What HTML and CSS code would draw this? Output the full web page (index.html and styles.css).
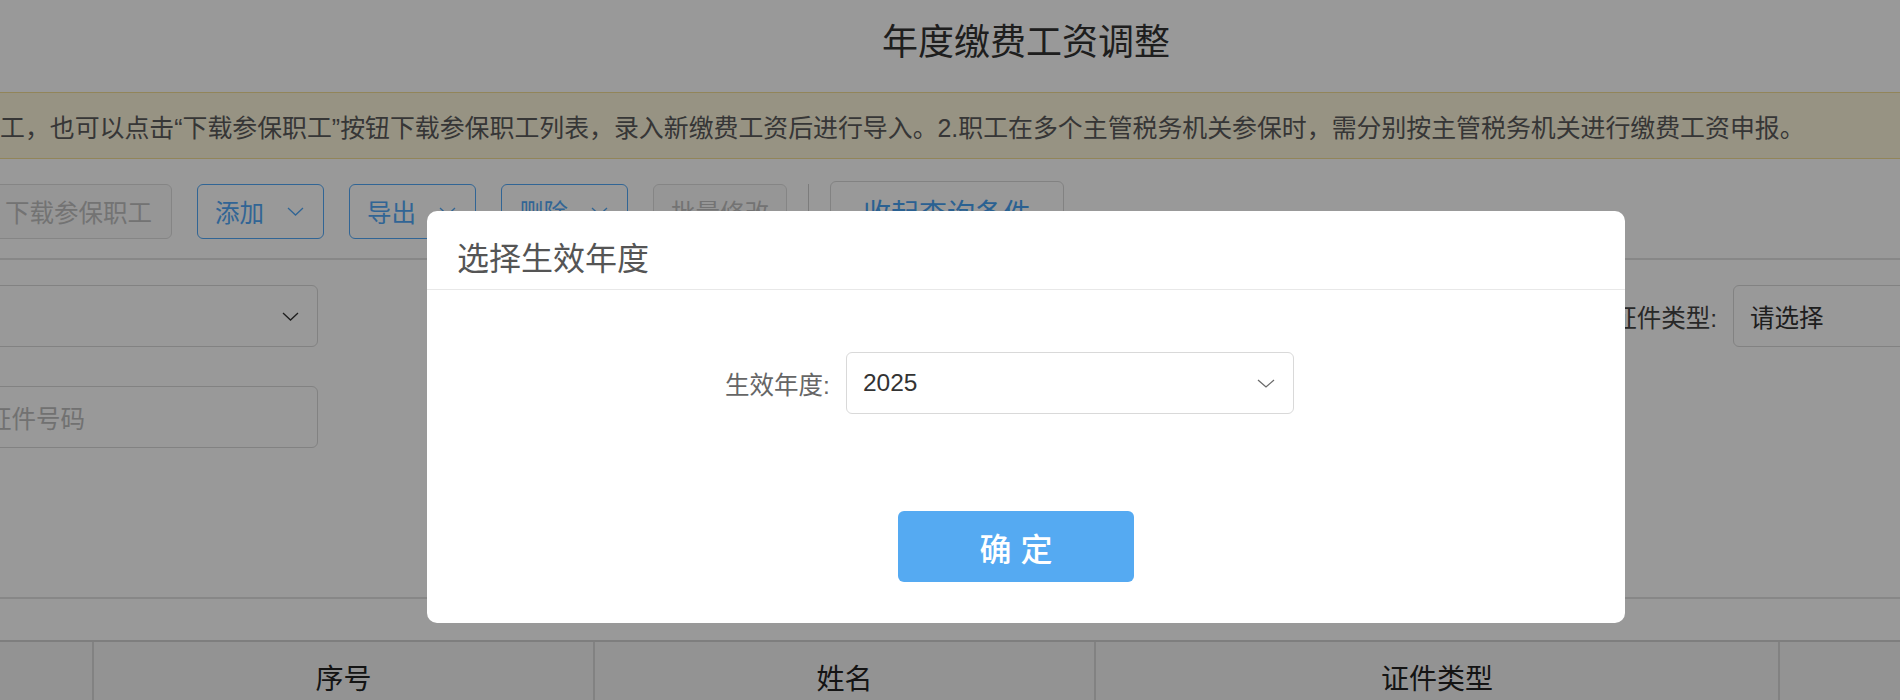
FILE: index.html
```html
<!DOCTYPE html>
<html lang="zh-CN">
<head>
<meta charset="utf-8">
<title>年度缴费工资调整</title>
<link rel="stylesheet" href="styles.css">
</head>
<body>
<div class="page">
  <header class="page-header">
    <h1 class="page-title">年度缴费工资调整</h1>
  </header>

  <div class="notice">工，也可以点击“下载参保职工”按钮下载参保职工列表，录入新缴费工资后进行导入。2.职工在多个主管税务机关参保时，需分别按主管税务机关进行缴费工资申报。</div>

  <div class="toolbar">
    <button class="btn btn-disabled btn-first">下载参保职工</button>
    <button class="btn btn-drop">添加<svg class="chev" viewBox="0 0 17 9" width="17" height="9"><polyline points="1,1 8.5,8 16,1"/></svg></button>
    <button class="btn btn-drop">导出<svg class="chev" viewBox="0 0 17 9" width="17" height="9"><polyline points="1,1 8.5,8 16,1"/></svg></button>
    <button class="btn btn-drop">删除<svg class="chev" viewBox="0 0 17 9" width="17" height="9"><polyline points="1,1 8.5,8 16,1"/></svg></button>
    <button class="btn btn-disabled btn-narrow">批量修改</button>
    <span class="divider"></span>
    <button class="btn btn-collapse">收起查询条件</button>
  </div>

  <section class="search">
    <div class="search-row">
      <div class="field field-left">
        <div class="select"><span></span><svg class="chev chev-dark" viewBox="0 0 17 9" width="17" height="9"><polyline points="1,1 8.5,8 16,1"/></svg></div>
      </div>
      <div class="field field-right">
        <label class="field-label">证件类型:</label>
        <div class="select"><span class="select-value">请选择</span></div>
      </div>
    </div>
    <div class="search-row">
      <div class="field field-left">
        <div class="input"><span class="placeholder">证件号码</span></div>
      </div>
    </div>
  </section>

  <div class="table">
    <div class="th"></div>
    <div class="th">序号</div>
    <div class="th">姓名</div>
    <div class="th">证件类型</div>
    <div class="th"></div>
  </div>

  <div class="overlay">
    <div class="modal">
      <div class="modal-header">
        <h2 class="modal-title">选择生效年度</h2>
      </div>
      <div class="modal-body">
        <div class="form-row">
          <label class="form-label">生效年度:</label>
          <div class="select select-lg"><span class="select-value">2025</span><svg class="chev chev-gray" viewBox="0 0 18 9" width="18" height="9"><polyline points="1,1 9,8 17,1"/></svg></div>
        </div>
        <div class="form-actions">
          <button class="btn-confirm">确 定</button>
        </div>
      </div>
    </div>
  </div>
</div>
</body>
</html>
```

FILE: styles.css
```css
html, body {
  margin: 0;
  padding: 0;
  background: #ffffff;
}

body {
  width: 1900px;
  height: 700px;
  overflow: hidden;
  font-family: "Liberation Sans", "Noto Sans CJK SC", sans-serif;
  color: #333333;
}

.page {
  position: relative;
  width: 2652px;
  min-height: 700px;
  margin-left: -300px;
}

/* header */
.page-header {
  height: 92px;
  display: flex;
  justify-content: center;
  align-items: flex-start;
}

.page-title {
  margin: 0;
  font-size: 36px;
  font-weight: normal;
  line-height: 86px;
  color: #333333;
}

/* notice */
.notice {
  background: #fcf5da;
  border-top: 1px solid #f3de96;
  border-bottom: 1px solid #f3de96;
  height: 60px;
  padding-top: 5px;
  padding-left: 300px;
  line-height: 60px;
  font-size: 24.9px;
  color: #5a5a5a;
  white-space: nowrap;
}

/* toolbar */
.toolbar {
  display: flex;
  align-items: center;
  gap: 25px;
  height: 61px;
  margin-top: 22px;
  padding-left: 285px;
  padding-bottom: 16px;
  border-bottom: 2px solid #e2e2e2;
}

.btn {
  box-sizing: border-box;
  height: 55px;
  display: flex;
  align-items: center;
  border: 1px solid #dcdcdc;
  border-radius: 6px;
  background: #ffffff;
  font-family: inherit;
  font-size: 24.5px;
  padding: 0 20px;
  white-space: nowrap;
  flex: none;
}

.btn-disabled {
  background: #fbfbfb;
  border-color: #dedede;
  color: #c0c0c0;
}

.btn-first {
  padding: 0 19px;
}

.btn-narrow {
  padding: 0 17px;
}

.btn-drop {
  border-color: #52a9f8;
  color: #52a9f8;
  padding: 0 19px 0 17px;
  gap: 23px;
}

.chev {
  display: block;
  flex: none;
}

.chev polyline {
  fill: none;
  stroke: currentColor;
  stroke-width: 1.3;
}

.chev-dark {
  color: #333333;
}

.chev-gray {
  color: #6a6a6a;
}

.divider {
  width: 1px;
  height: 55px;
  background: #cfcfcf;
  margin: 0 -4px;
  flex: none;
}

.btn-collapse {
  height: 61px;
  font-size: 28px;
  padding: 0 32px;
  border-color: #d9d9d9;
  color: #47a2f3;
}

/* search */
.search {
  display: flex;
  flex-direction: column;
  gap: 39px;
  padding: 25px 0 149px 270px;
  border-bottom: 2px solid #e2e2e2;
}

.search-row {
  display: flex;
  height: 62px;
}

.field {
  display: flex;
  align-items: center;
}

.select,
.input {
  box-sizing: border-box;
  height: 62px;
  display: flex;
  align-items: center;
  justify-content: space-between;
  padding: 0 18px 0 16px;
  border: 1px solid #d9d9d9;
  border-radius: 6px;
  background: #ffffff;
  font-size: 24.5px;
}

.field-left .select,
.field-left .input {
  width: 348px;
}

.field-right {
  margin-left: 1279px;
}

.field-label {
  width: 120px;
  margin-right: 16px;
  text-align: right;
  font-size: 24.5px;
  color: #444444;
}

.field-right .select {
  width: 320px;
}

.select-value {
  color: #333333;
}

.placeholder {
  color: #bdbdbd;
}

/* table */
.table {
  display: grid;
  grid-template-columns: 122px 501px 501px 684px 400px;
  margin-top: 41px;
  margin-left: 270px;
  border-top: 2px solid #d2d2d2;
  background: #f6f6f6;
}

.th {
  height: 70px;
  display: flex;
  align-items: center;
  justify-content: center;
  font-size: 28px;
  color: #222222;
  border-left: 2px solid #d9d9d9;
}

.th:first-child {
  border-left: none;
}

/* modal */
.overlay {
  position: absolute;
  inset: 0;
  box-sizing: border-box;
  padding-top: 211px;
  background: rgba(0, 0, 0, 0.4);
}

.modal {
  width: 1198px;
  margin: 0 auto;
  background: #ffffff;
  border-radius: 10px;
}

.modal-header {
  padding: 24px 30px 6px;
  border-bottom: 1px solid #e8e8e8;
}

.modal-title {
  margin: 0;
  font-size: 32px;
  line-height: 48px;
  font-weight: normal;
  color: #555555;
}

.modal-body {
  padding: 62px 0 41px;
}

.form-row {
  display: flex;
  justify-content: center;
  align-items: center;
  padding-right: 33px;
}

.form-label {
  margin-right: 16px;
  font-size: 24.5px;
  color: #666666;
}

.select-lg {
  width: 448px;
}

.form-actions {
  display: flex;
  justify-content: center;
  margin-top: 97px;
  padding-right: 20px;
}

.btn-confirm {
  width: 236px;
  height: 71px;
  border: none;
  border-radius: 6px;
  background: #55aaf2;
  color: #ffffff;
  font-family: inherit;
  font-size: 32px;
  font-weight: 500;
}
```
